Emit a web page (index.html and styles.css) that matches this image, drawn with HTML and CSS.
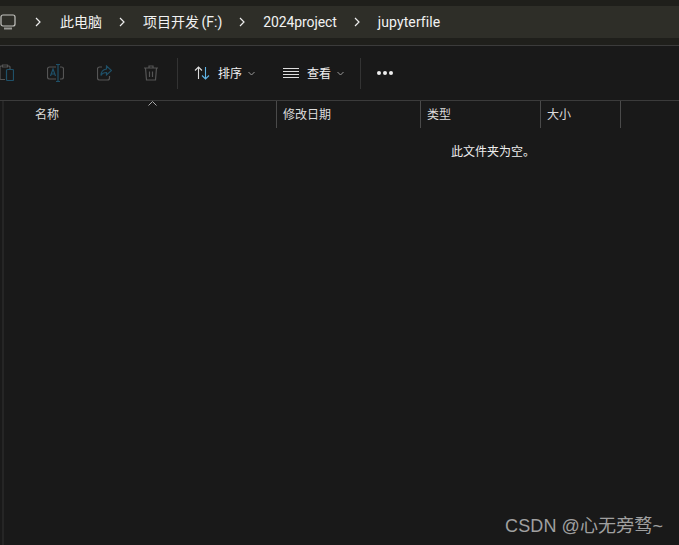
FILE: index.html
```html
<!DOCTYPE html>
<html lang="zh-CN">
<head>
    <meta charset="UTF-8">
    <meta name="viewport" content="width=device-width, initial-scale=1.0">
    <title>jupyterfile</title>
    <link rel="stylesheet" href="styles.css">
</head>
<body>

    <div class="address-wrap">
        <div class="address-bar">
            <svg class="pc-icon" width="16" height="16" viewBox="0 0 16 16">
                <rect x="1" y="1" width="14" height="11" rx="2" fill="none" stroke="#c4c4c0" stroke-width="1.2"/>
                <path d="M4 14.5h8" stroke="#9a9a96" stroke-width="2"/>
            </svg>
            <svg class="crumb-arrow arrow-first" width="6" height="10" viewBox="0 0 6 10"><path d="M1 1l4 4-4 4" fill="none" stroke="#eee" stroke-width="1.2"/></svg>
            <span class="crumb">此电脑</span>
            <svg class="crumb-arrow" width="6" height="10" viewBox="0 0 6 10"><path d="M1 1l4 4-4 4" fill="none" stroke="#eee" stroke-width="1.2"/></svg>
            <span class="crumb crumb-drive">项目开发 (F:)</span>
            <svg class="crumb-arrow" width="6" height="10" viewBox="0 0 6 10"><path d="M1 1l4 4-4 4" fill="none" stroke="#eee" stroke-width="1.2"/></svg>
            <span class="crumb crumb-project">2024project</span>
            <svg class="crumb-arrow" width="6" height="10" viewBox="0 0 6 10"><path d="M1 1l4 4-4 4" fill="none" stroke="#eee" stroke-width="1.2"/></svg>
            <span class="crumb crumb-last">jupyterfile</span>
        </div>
    </div>

    <div class="toolbar">
        <div class="tool-group">
            <svg class="tool-icon icon-paste" width="14" height="18" viewBox="0 0 14 18">
                <path d="M5 15.5H1a1 1 0 0 1-1-1V3a1 1 0 0 1 1-1h1.500M2.500 1h5v2h-5zM7.500 2H9a1 1 0 0 1 1 1v2" fill="none" stroke="#555" stroke-width="1.200"/>
                <rect x="6.500" y="5.500" width="7" height="11" rx="1" fill="none" stroke="#1f5068" stroke-width="1.200"/>
            </svg>
            <svg class="tool-icon icon-rename" width="17" height="18" viewBox="0 0 17 18">
                <path d="M9 3H2.500a2 2 0 0 0-2 2v8a2 2 0 0 0 2 2H9M13 3h1.500a2 2 0 0 1 2 2v8a2 2 0 0 1-2 2H13" fill="none" stroke="#555" stroke-width="1.200"/>
                <path d="M9 .5h4M11 .5v17M9 17.500h4M3.500 12l2.500-7 2.500 7M4.500 10h3" fill="none" stroke="#1f5068" stroke-width="1.200"/>
            </svg>
            <svg class="tool-icon icon-share" width="15" height="16" viewBox="0 0 15 16">
                <path d="M5 2H2.500a2 2 0 0 0-2 2v9a2 2 0 0 0 2 2h8a2 2 0 0 0 2-2v-2" fill="none" stroke="#555" stroke-width="1.200"/>
                <path d="M9.500 1l5 4.500-5 4.500V7.500c-3 0-4.500 1-5.500 3 0-4 2-6 5.500-6.500z" fill="none" stroke="#1f5068" stroke-width="1.200"/>
            </svg>
            <svg class="tool-icon icon-trash" width="14" height="16" viewBox="0 0 14 16">
                <path d="M0 3h14M5 3V1h4v2M1.500 3l1 12h9l1-12M5.500 6.500v5.500M8.500 6.500v5.500" fill="none" stroke="#555" stroke-width="1.200"/>
            </svg>
        </div>
        <div class="tool-sep"></div>
        <div class="tool-btn btn-sort">
            <svg width="16" height="14" viewBox="0 0 16 14">
                <path d="M1 4.500L4.500 1 8 4.500M4.500 1v12" fill="none" stroke="#ddd" stroke-width="1.100"/>
                <path d="M8 9.500l3.500 3.500L15 9.500M11.500 1v12" fill="none" stroke="#5fb4e6" stroke-width="1.100"/>
            </svg>
            <span>排序</span>
            <svg class="caret" width="7" height="5" viewBox="0 0 7 5"><path d="M.5 1l3 3 3-3" fill="none" stroke="#999" stroke-width="1"/></svg>
        </div>
        <div class="tool-btn btn-view">
            <svg width="16" height="11" viewBox="0 0 16 11">
                <path d="M0 .5h16M0 3.500h16M0 6.500h16M0 9.500h16" stroke="#ddd" stroke-width="1"/>
            </svg>
            <span>查看</span>
            <svg class="caret" width="7" height="5" viewBox="0 0 7 5"><path d="M.5 1l3 3 3-3" fill="none" stroke="#999" stroke-width="1"/></svg>
        </div>
        <div class="tool-sep"></div>
        <div class="more"><i></i><i></i><i></i></div>
    </div>

    <div class="list">
        <div class="list-head">
            <svg class="sort-mark" width="9" height="5" viewBox="0 0 9 5"><path d="M.5 4.500l4-4 4 4" fill="none" stroke="#aaa" stroke-width="1"/></svg>
            <div class="col col-name">名称</div>
            <div class="col col-date">修改日期</div>
            <div class="col col-type">类型</div>
            <div class="col col-size">大小</div>
        </div>
        <p class="empty">此文件夹为空。</p>
    </div>

    <div class="watermark">CSDN @心无旁骛~</div>

</body>
</html>
```

FILE: styles.css
```css
html, body {
    height: 100%;
}

body {
    margin: 0;
    position: relative;
    display: flex;
    flex-direction: column;
    overflow: hidden;
    background: #191919;
    color: #fff;
    font-family: "Open Sans", "Noto Sans CJK SC", sans-serif;
    font-size: 12px;
}

/* address bar */
.address-wrap {
    height: 46px;
    padding-top: 6px;
    box-sizing: border-box;
    background: #1f1f1b;
    border-bottom: 1px solid #3b3b3b;
    flex: none;
}

.address-bar {
    height: 32px;
    display: flex;
    align-items: center;
    background: #2e2e28;
    font-family: Roboto, "Noto Sans CJK SC", sans-serif;
    font-size: 14px;
    line-height: 30px;
    color: #f2f2f2;
}

.pc-icon {
    flex: none;
}

.crumb-arrow {
    flex: none;
    margin: 0 18px 0 17px;
}

.arrow-first {
    margin: 0 19px;
}

.crumb {
    white-space: nowrap;
}

.crumb-drive {
    word-spacing: -1px;
}

.crumb-project {
    letter-spacing: -.1px;
}

.crumb-last {
    letter-spacing: .1px;
}

/* toolbar */
.toolbar {
    height: 55px;
    box-sizing: border-box;
    flex: none;
    display: flex;
    align-items: center;
    background: #191919;
    border-bottom: 1px solid #3b3b3b;
}

.tool-group {
    width: 177px;
    display: flex;
    align-items: center;
    flex: none;
}

.tool-icon {
    flex: none;
}

.icon-paste {
    margin-right: 33px;
}

.icon-rename {
    margin-right: 33px;
}

.icon-share {
    margin-right: 32px;
}

.tool-sep {
    width: 1px;
    height: 31px;
    background: #333;
    flex: none;
}

.tool-btn {
    display: flex;
    align-items: center;
    color: #f0f0f0;
    flex: none;
}

.tool-btn span {
    margin: 0 6px 0 8px;
}

.btn-sort {
    margin-left: 16px;
}

.btn-view {
    margin-left: 28px;
    margin-right: 16px;
}

.more {
    display: flex;
    gap: 2px;
    margin-left: 16px;
}

.more i {
    width: 4px;
    height: 4px;
    border-radius: 50%;
    background: #eee;
}

/* column headers */
.list {
    flex: 1;
    margin-left: 2px;
    border-left: 2px solid #252525;
}

.list-head {
    position: relative;
    height: 27px;
    display: flex;
    color: #dcdcdc;
    line-height: 27px;
}

.sort-mark {
    position: absolute;
    left: 144px;
    top: 0;
}

.col {
    box-sizing: border-box;
    padding-left: 6px;
    border-right: 1px solid #4a4a4a;
    flex: none;
}

.col-name {
    width: 273px;
    padding-left: 31px;
}

.col-date {
    width: 144px;
}

.col-type {
    width: 120px;
}

.col-size {
    width: 80px;
}

/* empty folder */
.empty {
    margin: 14px 0 0 447px;
    color: #eee;
}

.watermark {
    position: absolute;
    right: 16px;
    bottom: 8px;
    color: #a0a0a0;
    font-family: "Liberation Sans", "Noto Sans CJK SC", sans-serif;
    font-size: 18px;
    letter-spacing: .1px;
}
```
